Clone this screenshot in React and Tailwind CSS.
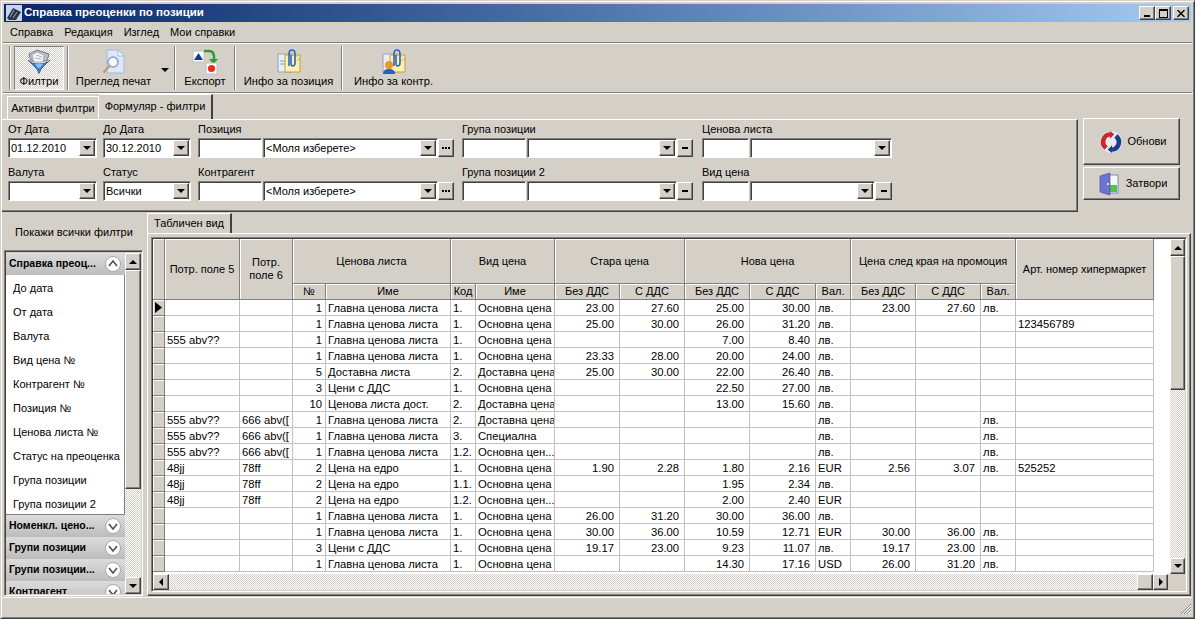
import React from 'react';

const raised = 'border border-t-white border-l-white border-r-[#404040] border-b-[#404040] shadow-[inset_-1px_-1px_0_#808080]';
const sunken = 'border border-t-[#808080] border-l-[#808080] border-r-white border-b-white shadow-[inset_1px_1px_0_#404040]';
const checker = 'bg-[repeating-conic-gradient(#d4d0c8_0_25%,#ffffff_0_50%)] bg-size-[2px_2px]';

const Tri = ({ dir = 'down' }) => {
  const pts = { down: '0,0 8,0 4,4', up: '0,4 8,4 4,0', left: '4,0 4,8 0,4', right: '0,0 0,8 4,4' }[dir];
  const box = dir === 'down' || dir === 'up' ? [8, 4] : [4, 8];
  return (
    <svg width={box[0]} height={box[1]} viewBox={`0 0 ${box[0]} ${box[1]}`}>
      <polygon points={pts} fill="#000" />
    </svg>
  );
};

const ScrollBtn = ({ dir, className = '' }) => (
  <div className={`${raised} bg-[#d4d0c8] flex items-center justify-center shrink-0 ${className}`}>
    <Tri dir={dir} />
  </div>
);

const FilterIcon = () => (
  <svg width="24" height="25" viewBox="0 0 24 25">
    <path d="M2 5 L10 1 L22 5 L20 12 L4 12 Z" fill="#b8bec8" stroke="#5c6476" strokeWidth="0.8" />
    <path d="M5 6 L10 3 L17 6 L16 13 L7 13 Z" fill="#f4f4f4" stroke="#8c93a3" strokeWidth="0.6" />
    <path d="M9 6 L15 8 M8 9 L14 10" stroke="#98a0b0" strokeWidth="0.8" />
    <path d="M1 11 C4 14 7 15 12 15 C17 15 20 14 23 11 L14 20 L12 24.5 L10 20 Z" fill="#3c80cc" stroke="#1f4f92" strokeWidth="0.8" />
    <path d="M8 15 L16 15 L13 19 L11 19 Z" fill="#8cbcec" />
  </svg>
);

const PreviewIcon = () => (
  <svg width="24" height="26" viewBox="0 0 24 26">
    <path d="M5 1 H16 L22 7 V24 H5 Z" fill="#dce8fa" stroke="#a4b8d8" />
    <path d="M16 1 V7 H22 Z" fill="#f8fbff" stroke="#a4b8d8" />
    <circle cx="11" cy="13" r="5" fill="#f4f8ff" stroke="#8aa0c4" strokeWidth="1.5" />
    <path d="M7.5 17 L1.5 23.5" stroke="#c89a60" strokeWidth="2.4" />
  </svg>
);

const ExportIcon = () => (
  <svg width="26" height="26" viewBox="0 0 26 26">
    <rect x="1" y="2" width="11" height="11" fill="#fff" stroke="#b8c0cc" />
    <polygon points="2,11 6.5,4 11,11" fill="#123c98" />
    <path d="M12 2 H17 Q22 2 22 8 V11" stroke="#2f9a2f" strokeWidth="2.4" fill="none" />
    <polygon points="17,10 26,10 21.5,15" fill="#2f9a2f" />
    <rect x="14" y="14" width="11" height="11" fill="#fff" stroke="#b8c0cc" />
    <circle cx="19.5" cy="19.5" r="3.6" fill="#ee2a1c" />
  </svg>
);

const InfoIcon = ({ person }) => (
  <svg width="24" height="26" viewBox="0 0 24 26">
    <rect x="1" y="5" width="14" height="18" fill="#e8eef8" stroke="#94a4c0" />
    {!person && <path d="M3 12 H9 M3 15 H9" stroke="#58b0c8" strokeWidth="1" />}
    <path d="M8 6 H23 V23 H8 Z" fill="#fdf0b0" stroke="#c8a030" />
    <path d="M18 6 L23 11 H18 Z" fill="#fff8d8" stroke="#c8a030" strokeWidth="0.6" />
    <path d="M12 17 V5 Q12 1 15 1 Q18 1 18 5 V14 Q18 17 15.5 17 Q14 17 14 14 V6" fill="none" stroke="#2c64c0" strokeWidth="1.6" />
    {person && (
      <g>
        <circle cx="7" cy="16" r="4" fill="#e8982c" />
        <path d="M1 25 Q1 20 7 20 Q13 20 13 25 Z" fill="#2c5cc0" />
      </g>
    )}
  </svg>
);

const RefreshIcon = () => (
  <svg width="24" height="24" viewBox="0 0 22 22">
    <circle cx="11" cy="11" r="10.5" fill="#e8e8ee" stroke="#c0c0cc" strokeWidth="0.6" />
    <path d="M10 2 A9 9 0 0 0 5 18 L8 15 A5 5 0 0 1 10 6 Z" fill="#c82828" />
    <path d="M12 20 A9 9 0 0 0 17 4 L14 7 A5 5 0 0 1 12 16 Z" fill="#1c3c88" />
    <polygon points="10,1 10,8 14,4" fill="#c82828" />
    <polygon points="12,21 12,14 8,18" fill="#1c3c88" />
  </svg>
);

const DoorIcon = () => (
  <svg width="20" height="24" viewBox="0 0 20 24">
    <rect x="6" y="3" width="13" height="18" fill="#f4f8fc" stroke="#7c88c0" />
    <rect x="10" y="13" width="8" height="7" fill="#58c048" />
    <polygon points="1,4 11,1 11,23 1,20" fill="#6c74d0" stroke="#3c4498" strokeWidth="0.6" />
    <rect x="8" y="11" width="1.5" height="2" fill="#fff" />
  </svg>
);

const Chevron = ({ up }) => (
  <svg width="16" height="16" viewBox="0 0 16 16" className="shrink-0">
    <circle cx="8" cy="8" r="7.5" fill="#ffffff" stroke="#a8a8a8" />
    <path d={up ? 'M4 10 L8 5 L12 10' : 'M4 6 L8 11 L12 6'} fill="none" stroke="#505050" strokeWidth="1.6" />
  </svg>
);

const Sep = () => <div className="w-[2px] h-[44px] mx-[1px] border-l border-l-[#808080] border-r border-r-white shrink-0" />;

const ToolBtn = ({ label, children, className = '' }) => (
  <div className={`h-[46px] flex flex-col items-center justify-between shrink-0 ${className}`}>
    <div className="h-[28px] pt-[5px] flex items-center justify-center">{children}</div>
    <span className="leading-[14px] pb-[3px] whitespace-nowrap text-[11.2px]">{label}</span>
  </div>
);

const Combo = ({ width, value }) => (
  <div className={`${sunken} ${width} h-[20px] bg-white flex items-center justify-between pl-[2px] pr-[1px] shrink-0`}>
    <span className="text-[11px] leading-none whitespace-nowrap">{value}</span>
    <div className={`${raised} bg-[#d4d0c8] w-[16px] h-[16px] flex items-center justify-center`}>
      <Tri />
    </div>
  </div>
);

const Code = ({ width }) => <div className={`${sunken} ${width} h-[20px] bg-white shrink-0`} />;

const Extra = ({ kind, width = 'w-[16px]' }) => (
  <div className={`${raised} ${width} h-[18px] bg-[#d4d0c8] flex items-center justify-center shrink-0 font-bold leading-none`}>
    {kind === 'more' ? (
      <div className="flex gap-[1px]">
        <div className="w-[2px] h-[2px] bg-black" />
        <div className="w-[2px] h-[2px] bg-black" />
        <div className="w-[2px] h-[2px] bg-black" />
      </div>
    ) : (
      <div className="w-[6px] h-[2px] bg-black" />
    )}
  </div>
);

const Field = ({ label, width, children }) => (
  <div className={`${width} shrink-0`}>
    <div className="h-[17px] leading-[17px] whitespace-nowrap">{label}</div>
    <div className="flex items-center">{children}</div>
  </div>
);

const FilterRow = ({ first }) => (
  <div className="flex">
    <Field label={first ? 'От Дата' : 'Валута'} width="w-[95px]">
      <Combo width="w-[89px]" value={first ? '01.12.2010' : ''} />
    </Field>
    <Field label={first ? 'До Дата' : 'Статус'} width="w-[95px]">
      <Combo width="w-[88px]" value={first ? '30.12.2010' : 'Всички'} />
    </Field>
    <Field label={first ? 'Позиция' : 'Контрагент'} width="w-[264px]">
      <Code width="w-[64px] mr-[1px]" />
      <Combo width="w-[175px]" value="<Моля изберете>" />
      <Extra kind="more" />
    </Field>
    <Field label={first ? 'Група позиции' : 'Група позиции 2'} width="w-[240px]">
      <Code width="w-[64px] mr-[1px]" />
      <Combo width="w-[150px]" value="" />
      <Extra kind="minus" />
    </Field>
    <Field label={first ? 'Ценова листа' : 'Вид цена'} width="w-[190px]">
      <Code width="w-[47px] mr-[1px]" />
      {first ? (
        <Combo width="w-[142px]" value="" />
      ) : (
        <>
          <Combo width="w-[125px]" value="" />
          <Extra kind="minus" width="w-[17px]" />
        </>
      )}
    </Field>
  </div>
);

const filterItems = ['До дата', 'От дата', 'Валута', 'Вид цена №', 'Контрагент №', 'Позиция №', 'Ценова листа №', 'Статус на преоценка', 'Група позиции', 'Група позиции 2'];
const collapsed = ['Номенкл. цено...', 'Групи позиции', 'Групи позиции...', 'Контрагент'];

const GroupHead = ({ label, up, className = '' }) => (
  <div className={`h-[22px] shrink-0 flex items-center justify-between pl-[3px] pr-[4px] bg-gradient-to-b from-[#dcdcdc] to-[#bcbcbc] ${className}`}>
    <span className="font-bold text-[10.5px] whitespace-nowrap">{label}</span>
    <Chevron up={up} />
  </div>
);

const glv = ['1', 'Главна ценова листа'];
const osn = ['1.', 'Основна цена'];
const edro = ['2', 'Цена на едро'];
const ddsList = ['3', 'Цени с ДДС'];
const abv = ['555 abv??', '666 abv(['];
const jj = ['48jj', '78ff'];
const none = ['', ''];

const rows = [
  [...none, ...glv, ...osn, '23.00', '27.60', '25.00', '30.00', 'лв.', '23.00', '27.60', 'лв.', ''],
  [...none, ...glv, ...osn, '25.00', '30.00', '26.00', '31.20', 'лв.', '', '', '', '123456789'],
  ['555 abv??', '', ...glv, ...osn, '', '', '7.00', '8.40', 'лв.', '', '', '', ''],
  [...none, ...glv, ...osn, '23.33', '28.00', '20.00', '24.00', 'лв.', '', '', '', ''],
  [...none, '5', 'Доставна листа', '2.', 'Доставна цена', '25.00', '30.00', '22.00', '26.40', 'лв.', '', '', '', ''],
  [...none, ...ddsList, ...osn, '', '', '22.50', '27.00', 'лв.', '', '', '', ''],
  [...none, '10', 'Ценова листа дост.', '2.', 'Доставна цена', '', '', '13.00', '15.60', 'лв.', '', '', '', ''],
  [...abv, ...glv, '2.', 'Доставна цена', '', '', '', '', 'лв.', '', '', 'лв.', ''],
  [...abv, ...glv, '3.', 'Специална', '', '', '', '', 'лв.', '', '', 'лв.', ''],
  [...abv, ...glv, '1.2.', 'Основна цен...', '', '', '', '', 'лв.', '', '', 'лв.', ''],
  [...jj, ...edro, ...osn, '1.90', '2.28', '1.80', '2.16', 'EUR', '2.56', '3.07', 'лв.', '525252'],
  [...jj, ...edro, '1.1.', 'Основна цена', '', '', '1.95', '2.34', 'лв.', '', '', '', ''],
  [...jj, ...edro, '1.2.', 'Основна цен...', '', '', '2.00', '2.40', 'EUR', '', '', '', ''],
  [...none, ...glv, ...osn, '26.00', '31.20', '30.00', '36.00', 'лв.', '', '', '', ''],
  [...none, ...glv, ...osn, '30.00', '36.00', '10.59', '12.71', 'EUR', '30.00', '36.00', 'лв.', ''],
  [...none, ...ddsList, ...osn, '19.17', '23.00', '9.23', '11.07', 'лв.', '19.17', '23.00', 'лв.', ''],
  [...none, ...glv, ...osn, '', '', '14.30', '17.16', 'USD', '26.00', '31.20', 'лв.', ''],
];

const colWidths = [12, 75, 53, 33, 125, 25, 79, 65, 65, 65, 66, 35, 65, 65, 35, 138];
const rightCols = [2, 6, 7, 8, 9, 11, 12];

const th = 'bg-[#d4d0c8] border-r border-b border-r-[#808080] border-b-[#808080] shadow-[inset_1px_1px_0_#ffffff] font-normal text-[11px] text-center leading-[13px] p-0 overflow-hidden whitespace-nowrap';
const td = 'h-[16px] border-r border-b border-[#c0c0c0] pt-[2px] px-0 pb-0 overflow-hidden whitespace-nowrap leading-[13px]';

const GridTable = () => (
  <table className="table-fixed border-separate border-spacing-0 w-[1001px] text-[11.25px]">
    <colgroup>
      {colWidths.map((w, i) => (
        <col key={i} style={{ width: w }} />
      ))}
    </colgroup>
    <thead>
      <tr className="h-[45px]">
        <th rowSpan={2} className={th}></th>
        <th rowSpan={2} className={th}>Потр. поле 5</th>
        <th rowSpan={2} className={`${th} whitespace-normal`}>Потр.<br />поле 6</th>
        <th colSpan={2} className={th}>Ценова листа</th>
        <th colSpan={2} className={th}>Вид цена</th>
        <th colSpan={2} className={th}>Стара цена</th>
        <th colSpan={3} className={th}>Нова цена</th>
        <th colSpan={3} className={th}>Цена след края на промоция</th>
        <th rowSpan={2} className={th}>Арт. номер хипермаркет</th>
      </tr>
      <tr className="h-[16px]">
        {['№', 'Име', 'Код', 'Име', 'Без ДДС', 'С ДДС', 'Без ДДС', 'С ДДС', 'Вал.', 'Без ДДС', 'С ДДС', 'Вал.'].map((h, i) => (
          <th key={i} className={th}>{h}</th>
        ))}
      </tr>
    </thead>
    <tbody>
      {rows.map((row, r) => (
        <tr key={r} className="h-[16px]">
          <td className="h-[16px] p-0 bg-[#d4d0c8] border-r border-b border-r-[#808080] border-b-[#808080] shadow-[inset_1px_1px_0_#ffffff] leading-none">
            {r === 0 && (
              <div className="h-[15px] flex items-center pl-[2px]">
                <svg width="7" height="11" viewBox="0 0 7 11">
                  <polygon points="0,0 7,5.5 0,11" fill="#000" />
                </svg>
              </div>
            )}
          </td>
          {row.map((cell, c) => (
            <td key={c} className={`${td} ${rightCols.includes(c) ? (c === 2 ? 'text-right pr-[3px]' : 'text-right pr-[5px]') : 'text-left pl-[2px]'}`}>
              {cell}
            </td>
          ))}
        </tr>
      ))}
    </tbody>
  </table>
);

export default function App() {
  return (
    <div className="w-[1195px] h-[619px] overflow-hidden bg-[#d4d0c8] text-black text-[11px] font-['Liberation_Sans',Arial,sans-serif] border border-t-[#d4d0c8] border-l-[#d4d0c8] border-r-[#404040] border-b-[#404040] shadow-[inset_1px_1px_0_#ffffff,inset_-1px_-1px_0_#808080] pt-[3px] px-[1px] flex flex-col">
      {/* title bar */}
      <div className="h-[18px] mx-[2px] shrink-0 flex items-center justify-between bg-gradient-to-r from-[#0a246a] to-[#a6caf0] pl-[2px] pr-[2px]">
        <div className="flex items-center gap-[2px]">
          <svg width="16" height="16" viewBox="0 0 16 16">
            <rect width="16" height="16" fill="#c8d4e8" />
            <path d="M1 13 L7 3 L15 7 L10 15 L3 15 Z" fill="#2c3448" />
            <path d="M4 12 L8 5 M7 13 L11 7" stroke="#98a8c4" strokeWidth="1" />
          </svg>
          <span className="text-white font-bold text-[11.5px] leading-none whitespace-nowrap">Справка преоценки по позиции</span>
        </div>
        <div className="flex items-center">
          <div className={`${raised} bg-[#d4d0c8] w-[16px] h-[14px] flex items-end justify-center pb-[2px]`}>
            <div className="w-[6px] h-[2px] bg-black" />
          </div>
          <div className={`${raised} bg-[#d4d0c8] w-[16px] h-[14px] flex items-center justify-center`}>
            <div className="w-[9px] h-[9px] border border-black border-t-2" />
          </div>
          <div className={`${raised} bg-[#d4d0c8] w-[16px] h-[14px] ml-[2px] flex items-center justify-center`}>
            <svg width="8" height="7" viewBox="0 0 8 7">
              <path d="M0.5 0 L7.5 7 M7.5 0 L0.5 7" stroke="#000" strokeWidth="1.4" />
            </svg>
          </div>
        </div>
      </div>

      {/* menu */}
      <div className="h-[21px] shrink-0 mx-[1px] flex items-center pl-[7px] gap-[11px] border-b border-b-[#808080]">
        <span>Справка</span>
        <span>Редакция</span>
        <span>Изглед</span>
        <span>Мои справки</span>
      </div>

      {/* toolbar */}
      <div className="h-[50px] shrink-0 mx-[1px] flex items-center pl-[5px] border-t border-t-white border-b border-b-[#808080]">
        <Sep />
        <div className="w-[2px] shrink-0" />
        <div className={`w-[50px] h-[44px] shrink-0 flex flex-col items-center justify-between pt-[2px] pb-[1px] border border-t-[#808080] border-l-[#808080] border-r-white border-b-white ${checker}`}>
          <FilterIcon />
          <span className="leading-[14px] whitespace-nowrap text-[11.2px]">Филтри</span>
        </div>
        <div className="w-[2px] shrink-0" />
        <Sep />
        <ToolBtn label="Преглед печат" className="w-[87px]">
          <PreviewIcon />
        </ToolBtn>
        <div className="w-[16px] h-[46px] shrink-0 flex items-center justify-center pt-[3px]">
          <Tri />
        </div>
        <Sep />
        <ToolBtn label="Експорт" className="w-[56px]">
          <ExportIcon />
        </ToolBtn>
        <Sep />
        <ToolBtn label="Инфо за позиция" className="w-[103px]">
          <InfoIcon />
        </ToolBtn>
        <Sep />
        <ToolBtn label="Инфо за контр." className="w-[99px]">
          <InfoIcon person />
        </ToolBtn>
      </div>

      {/* filter tabs */}
      <div className="h-[26px] shrink-0 flex items-end pl-[5px] pt-[1px] border-t border-t-white">
        <div className="w-[92px] h-[23px] shrink-0 flex items-center justify-center border border-white border-b-0 whitespace-nowrap pt-[1px]">Активни филтри</div>
        <div className="w-[114px] h-[25px] shrink-0 flex items-center justify-center border-r-2 border-r-[#404040] border-t border-t-white whitespace-nowrap pb-[2px]">Формуляр - филтри</div>
      </div>

      {/* filter area */}
      <div className="h-[93px] shrink-0 flex items-start">
        <div className="w-[1076px] h-[93px] shrink-0 border-t border-t-white border-r border-r-[#404040] border-b border-b-[#404040] shadow-[inset_-1px_-1px_0_#808080] pl-[6px] pt-[1px] flex flex-col gap-[6px]">
          <FilterRow first />
          <FilterRow />
        </div>
        <div className="ml-[5px] flex flex-col gap-[2px] -mt-[1px]">
          <div className={`${raised} w-[97px] h-[47px] flex items-center justify-center gap-[4px] pl-[3px]`}>
            <RefreshIcon />
            <span>Обнови</span>
          </div>
          <div className={`${raised} w-[97px] h-[33px] flex items-center justify-center gap-[7px] pl-[3px]`}>
            <DoorIcon />
            <span>Затвори</span>
          </div>
        </div>
      </div>

      {/* main */}
      <div className="h-[385px] shrink-0 flex">
        {/* sidebar */}
        <div className="w-[144px] shrink-0 flex flex-col">
          <div className="h-[38px] shrink-0 flex items-center justify-center pt-[3px] whitespace-nowrap">Покажи всички филтри</div>
          <div className={`${sunken} ml-[2px] w-[139px] h-[346px] flex overflow-hidden p-[1px] pt-[2px] bg-[#d4d0c8]`}>
            <div className="w-[119px] shrink-0 flex flex-col overflow-hidden">
              <GroupHead label="Справка преоц..." up />
              <div className="h-[240px] shrink-0 bg-white flex flex-col border-r border-r-[#808080] border-b border-b-[#808080] pl-[7px] pt-[1px]">
                {filterItems.map((item) => (
                  <div key={item} className="h-[24px] shrink-0 flex items-center whitespace-nowrap">{item}</div>
                ))}
              </div>
              {collapsed.map((c) => (
                <GroupHead key={c} label={c} />
              ))}
            </div>
            <div className="w-[16px] shrink-0 flex flex-col">
              <ScrollBtn dir="up" className="h-[17px]" />
              <div className={`${raised} h-[219px] shrink-0 bg-[#d4d0c8]`} />
              <div className={`flex-1 ${checker}`} />
              <ScrollBtn dir="down" className="h-[17px]" />
            </div>
          </div>
        </div>

        {/* grid side */}
        <div className="ml-[1px] w-[1044px] shrink-0 flex flex-col">
          <div className="h-[21px] shrink-0 flex items-end">
            <div className="w-[85px] h-[20px] flex items-center justify-center border-l border-l-white border-t border-t-white border-r-2 border-r-[#404040] whitespace-nowrap">Табличен вид</div>
          </div>
          <div className="h-[363px] shrink-0 border border-t-white border-l-white border-r-[#404040] border-b-[#404040] shadow-[inset_-1px_-1px_0_#808080] p-[3px]">
            <div className={`${sunken} w-[1036px] h-[355px] p-[1px] flex flex-col bg-[#d4d0c8]`}>
              <div className="h-[335px] shrink-0 flex">
                <div className="w-[1017px] shrink-0 bg-white overflow-hidden">
                  <GridTable />
                </div>
                <div className="w-[15px] shrink-0 flex flex-col">
                  <ScrollBtn dir="up" className="h-[17px]" />
                  <div className={`${raised} h-[134px] shrink-0 bg-[#d4d0c8]`} />
                  <div className={`flex-1 ${checker}`} />
                  <ScrollBtn dir="down" className="h-[16px]" />
                </div>
              </div>
              <div className="h-[16px] shrink-0 flex">
                <ScrollBtn dir="left" className="w-[16px]" />
                <div className={`flex-1 ${checker}`} />
                <div className={`${raised} w-[16px] shrink-0 bg-[#d4d0c8]`} />
                <ScrollBtn dir="right" className="w-[15px]" />
                <div className="w-[17px] shrink-0 bg-[#d4d0c8]" />
              </div>
            </div>
          </div>
        </div>
      </div>

      {/* status bar */}
      <div className="h-[18px] shrink-0 mx-[1px] border-t border-t-white relative">
        <svg width="12" height="12" viewBox="0 0 12 12" className="absolute right-[0px] bottom-[0px]">
          <path d="M11 1 L1 11 M11 4 L4 11 M11 7 L7 11" stroke="#808080" strokeWidth="1" />
          <path d="M11 2 L2 11 M11 5 L5 11 M11 8 L8 11" stroke="#ffffff" strokeWidth="1" />
        </svg>
      </div>
    </div>
  );
}
